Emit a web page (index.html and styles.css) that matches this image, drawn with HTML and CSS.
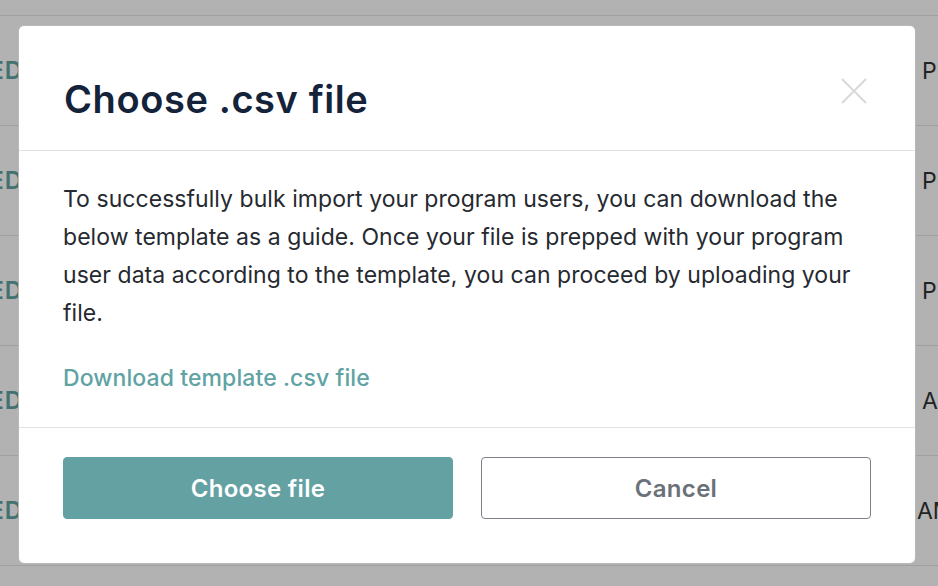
FILE: index.html
```html
<!DOCTYPE html>
<html lang="en">
<head>
<meta charset="utf-8">
<title>Choose .csv file</title>
<link rel="stylesheet" href="styles.css">
</head>
<body>
  <div class="table">
    <div class="row row-partial"></div>
    <div class="row"><div class="cell-status">APPROVED</div><div class="cell-time">PM</div></div>
    <div class="row"><div class="cell-status">APPROVED</div><div class="cell-time">PM</div></div>
    <div class="row"><div class="cell-status">APPROVED</div><div class="cell-time">PM</div></div>
    <div class="row"><div class="cell-status">APPROVED</div><div class="cell-time">AM</div></div>
    <div class="row"><div class="cell-status">APPROVED</div><div class="cell-time wide">AM</div></div>
  </div>

  <div class="overlay">
    <div class="modal" role="dialog" aria-labelledby="modal-title">
      <div class="modal-header">
        <h2 id="modal-title" class="modal-title">Choose .csv file</h2>
        <button class="close" aria-label="Close">
          <svg width="26" height="26" viewBox="0 0 26 26" aria-hidden="true">
            <path d="M1 1 L25 25 M25 1 L1 25" stroke="#d9d9d9" stroke-width="2" fill="none"/>
          </svg>
        </button>
      </div>
      <div class="modal-body">
        <p class="intro">To successfully bulk import your program users, you can download the below template as a guide. Once your file is prepped with your program user data according to the template, you can proceed by uploading your file.</p>
        <a class="download" href="#">Download template .csv file</a>
      </div>
      <div class="modal-footer">
        <button class="btn btn-primary">Choose file</button>
        <button class="btn btn-secondary">Cancel</button>
      </div>
    </div>
  </div>
</body>
</html>
```

FILE: styles.css
```css
html, body {
  margin: 0;
  padding: 0;
}

body {
  width: 938px;
  height: 586px;
  overflow: hidden;
  background: #ffffff;
  font-family: "Inter", "Lato", "Liberation Sans", sans-serif;
  position: relative;
}

/* background table */
.table {
  height: 586px;
  overflow: hidden;
  display: flex;
  flex-direction: column;
}

.row {
  flex: none;
  height: 109px;
  border-bottom: 1px solid #e4e4e4;
  display: flex;
  align-items: center;
}

.row-partial {
  height: 15px;
}

.cell-status {
  width: 23px;
  display: flex;
  justify-content: flex-end;
  white-space: nowrap;
  font-size: 24px;
  font-weight: 600;
  letter-spacing: 1px;
  color: #5fa3a4;
}

.cell-time {
  margin-left: auto;
  width: 16px;
  white-space: nowrap;
  font-size: 23px;
  color: #333333;
}

.cell-time.wide {
  width: 21px;
}

/* overlay + modal */
.overlay {
  position: absolute;
  inset: 0;
  background: rgba(0, 0, 0, 0.3);
  padding: 25px 0 0 18px;
}

.modal {
  width: 896px;
  height: 537px;
  background: #ffffff;
  border: 1px solid rgba(0, 0, 0, 0.28);
  border-radius: 6px;
  display: flex;
  flex-direction: column;
}

.modal-header {
  display: flex;
  align-items: flex-start;
  justify-content: space-between;
  padding: 51px 48px 0 45px;
  height: 73px;
  border-bottom: 1px solid #e2e2e2;
}

.modal-title {
  margin: 0;
  font-size: 38px;
  line-height: 44px;
  font-weight: 600;
  color: #15233a;
  letter-spacing: 0.6px;
}

.close {
  border: 0;
  background: none;
  padding: 0;
  margin: 0;
  width: 26px;
  height: 27px;
  cursor: pointer;
  display: block;
}

.close svg {
  display: block;
}

.modal-body {
  padding: 29px 44px 30px 44px;
  border-bottom: 1px solid #e2e2e2;
}

.intro {
  margin: 0 -18px 27px 0;
  font-size: 23px;
  line-height: 38px;
  letter-spacing: 0.05px;
  color: #262a30;
}

.download {
  display: block;
  font-size: 23px;
  line-height: 38px;
  font-weight: 500;
  letter-spacing: 0.1px;
  color: #5fa3a4;
  text-decoration: none;
}

.modal-footer {
  display: flex;
  gap: 28px;
  padding: 29px 44px 0 44px;
}

.btn {
  flex: 1;
  height: 62px;
  border-radius: 4px;
  font-family: inherit;
  font-size: 24px;
  font-weight: 600;
  letter-spacing: 0.3px;
  cursor: pointer;
}

.btn-primary {
  background: #63a1a3;
  border: 1px solid #63a1a3;
  color: #ffffff;
}

.btn-secondary {
  background: #ffffff;
  border: 1px solid #7d8188;
  color: #6b7178;
}
```
